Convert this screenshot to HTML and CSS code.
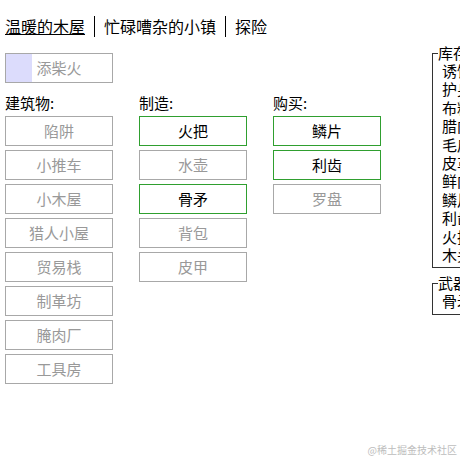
FILE: index.html
```html
<!DOCTYPE html>
<html lang="zh-CN">
<head>
<meta charset="utf-8">
<title>小黑屋</title>
<link rel="stylesheet" href="styles.css">
</head>
<body>
<div class="nav">
  <span class="tab active">温暖的木屋</span><span class="tab">忙碌嘈杂的小镇</span><span class="tab">探险</span>
</div>
<div class="row">
  <div class="main">
    <div class="btn fire">添柴火</div>
    <div class="cols">
      <div class="col">
        <div class="label">建筑物:</div>
        <div class="btn">陷阱</div>
        <div class="btn">小推车</div>
        <div class="btn">小木屋</div>
        <div class="btn">猎人小屋</div>
        <div class="btn">贸易栈</div>
        <div class="btn">制革坊</div>
        <div class="btn">腌肉厂</div>
        <div class="btn">工具房</div>
      </div>
      <div class="col">
        <div class="label">制造:</div>
        <div class="btn on">火把</div>
        <div class="btn">水壶</div>
        <div class="btn on">骨矛</div>
        <div class="btn">背包</div>
        <div class="btn">皮甲</div>
      </div>
      <div class="col">
        <div class="label">购买:</div>
        <div class="btn on">鳞片</div>
        <div class="btn on">利齿</div>
        <div class="btn">罗盘</div>
      </div>
    </div>
  </div>
  <div class="side">
    <fieldset class="box">
      <legend>库存</legend>
      <div class="item">诱饵</div>
      <div class="item">护身符</div>
      <div class="item">布料</div>
      <div class="item">腊肉</div>
      <div class="item">毛皮</div>
      <div class="item">皮革</div>
      <div class="item">鲜肉</div>
      <div class="item">鳞片</div>
      <div class="item">利齿</div>
      <div class="item">火把</div>
      <div class="item">木头</div>
    </fieldset>
    <fieldset class="box weapons">
      <legend>武器</legend>
      <div class="item">骨矛</div>
    </fieldset>
  </div>
</div>
<div class="mark">@稀土掘金技术社区</div>
</body>
</html>
```
FILE: styles.css
```css
html, body {
  margin: 0;
  height: 100%;
  overflow: hidden;
  background: #fff;
}
body {
  position: relative;
  padding: 16px 0 0 5px;
  box-sizing: border-box;
  font-family: "Noto Sans CJK SC", "Microsoft YaHei", sans-serif;
  color: #000;
}
.nav {
  font-size: 16px;
  line-height: 21px;
  height: 21px;
  white-space: nowrap;
}
.tab {
  display: inline-block;
  vertical-align: top;
}
.tab + .tab {
  border-left: 1px solid #000;
  margin-left: 9px;
  padding-left: 9px;
}
.tab.active {
  text-decoration: underline;
}
.row {
  display: flex;
  margin-top: 7px;
}
.main {
  width: 427px;
  flex: none;
  padding-top: 9px;
}
.btn {
  box-sizing: border-box;
  width: 108px;
  height: 30px;
  border: 1px solid #a8a8a8;
  color: #999;
  font-size: 15px;
  line-height: 28px;
  text-align: center;
  margin-bottom: 4px;
  background: #fff;
}
.btn.on {
  border-color: #2f9f2f;
  color: #000;
}
.btn.fire {
  margin-bottom: 0;
  background: linear-gradient(to right, #dcdcfc 0, #dcdcfc 26px, #fff 26px);
}
.cols {
  display: grid;
  grid-template-columns: 108px 108px 108px;
  column-gap: 26px;
  align-items: start;
}
.label {
  font-size: 15px;
  line-height: 20px;
  margin-top: 10px;
  margin-bottom: 3px;
}
.side {
  flex: none;
  width: 28px;
  overflow: hidden;
}
.box {
  margin: 0;
  width: 120px;
  border: 1px solid #333;
  padding: 0 0 3px 9px;
  min-width: 0;
}
.box legend {
  padding: 0;
  margin-left: -4px;
  font-size: 15px;
  line-height: 18px;
  white-space: nowrap;
}
.item {
  font-size: 15px;
  line-height: 18.4px;
  white-space: nowrap;
}
.weapons {
  margin-top: 6px;
}
.mark {
  position: absolute;
  right: 3px;
  bottom: 4px;
  font-size: 10px;
  line-height: 12px;
  color: #bdbdbd;
}
```
